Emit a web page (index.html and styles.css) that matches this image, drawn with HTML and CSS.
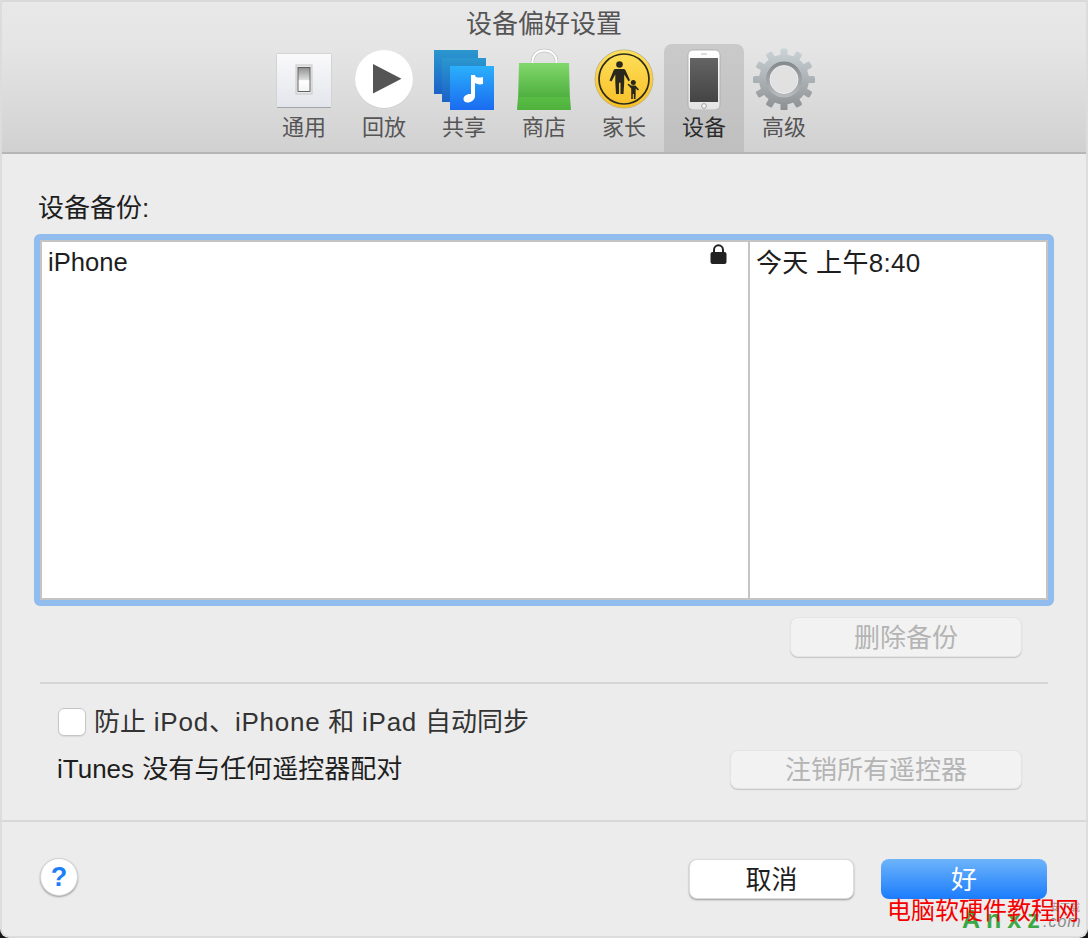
FILE: index.html
```html
<!DOCTYPE html>
<html lang="zh-CN">
<head>
<meta charset="utf-8">
<title>设备偏好设置</title>
<link rel="stylesheet" href="styles.css">
</head>
<body>
<div class="window">
  <header class="toolbar">
    <h1 class="title">设备偏好设置</h1>
    <nav class="tabs">
      <div class="tab">
        <svg class="icon" viewBox="0 0 80 64" width="80" height="64">
          <defs>
            <linearGradient id="plate" x1="0" y1="0" x2="0" y2="1"><stop offset="0" stop-color="#fafafb"/><stop offset="1" stop-color="#e3e5ec"/></linearGradient>
            <linearGradient id="rocker" x1="0" y1="0" x2="0" y2="1"><stop offset="0" stop-color="#8f8f8f"/><stop offset=".5" stop-color="#dcdcdc"/><stop offset=".55" stop-color="#fff"/><stop offset="1" stop-color="#f4f4f4"/></linearGradient>
          </defs>
          <rect x="12.5" y="7.5" width="55" height="54" rx="1" fill="url(#plate)" stroke="#d4d4d6"/>
          <path d="M13 61.5H67" stroke="#a4a4a6" stroke-width="1"/>
          <rect x="32" y="19" width="16" height="29" fill="#e9e9ea" stroke="#c8c8c8"/>
          <rect x="34" y="21.500" width="12" height="24" fill="url(#rocker)" stroke="#555" stroke-width=".9"/>
        </svg>
        <span class="tab-label">通用</span>
      </div>
      <div class="tab">
        <svg class="icon" viewBox="0 0 80 64" width="80" height="64">
          <circle cx="40" cy="33.500" r="29" fill="#c4c4c4"/>
          <circle cx="40" cy="33" r="29" fill="#fff"/>
          <path d="M29 18V47.500L57.500 32.800Z" fill="#555"/>
        </svg>
        <span class="tab-label">回放</span>
      </div>
      <div class="tab">
        <svg class="icon" viewBox="0 0 80 64" width="80" height="64">
          <defs>
            <linearGradient id="back" x1="0" y1="0" x2="0" y2="1"><stop offset="0" stop-color="#2b97cf"/><stop offset="1" stop-color="#1b62c6"/></linearGradient>
            <linearGradient id="front" x1="0" y1="0" x2="0" y2="1"><stop offset="0" stop-color="#2bb0fb"/><stop offset="1" stop-color="#1a6bf0"/></linearGradient>
          </defs>
          <rect x="10" y="4" width="44" height="44" fill="url(#back)"/>
          <rect x="18" y="12" width="44" height="44" fill="url(#back)"/>
          <rect x="26" y="20" width="44" height="44" fill="url(#front)"/>
          <path d="M47 29H51C51 32 55 32 59 31V38C55 39 53 38 51 37V50C51 54 47 56.500 43.500 56.500C41 56.500 39.500 55 39.500 53C39.500 50 43 47.500 47 48Z" fill="#fff"/>
        </svg>
        <span class="tab-label">共享</span>
      </div>
      <div class="tab">
        <svg class="icon" viewBox="0 0 80 64" width="80" height="64">
          <defs>
            <linearGradient id="bag" x1="0" y1="0" x2="0" y2="1"><stop offset="0" stop-color="#82d86c"/><stop offset=".7" stop-color="#4fb040"/><stop offset=".71" stop-color="#58bd45"/><stop offset="1" stop-color="#4fb03c"/></linearGradient>
          </defs>
          <path d="M28.500 18V16C28.500 8.500 34 4.500 40.500 4.500C47 4.500 52.500 8.500 52.500 16V18" fill="none" stroke="#c4c4c4" stroke-width="3.400"/>
          <path d="M28.500 18V16C28.500 8.500 34 4.500 40.500 4.500C47 4.500 52.500 8.500 52.500 16V18" fill="none" stroke="#fff" stroke-width="2"/>
          <path d="M15 17H65L65.800 49L67 63.500C67 64.500 66 65 65 65H15C14 65 13 64.500 13 63.500L14.200 49Z" fill="url(#bag)"/>
        </svg>
        <span class="tab-label">商店</span>
      </div>
      <div class="tab">
        <svg class="icon" viewBox="0 0 80 64" width="80" height="64">
          <defs>
            <linearGradient id="gold" x1="0" y1="0" x2="0" y2="1"><stop offset="0" stop-color="#fde05a"/><stop offset="1" stop-color="#f8bf28"/></linearGradient>
          </defs>
          <circle cx="40" cy="33" r="29.500" fill="#b9b08a"/>
          <circle cx="40" cy="33" r="28.800" fill="url(#gold)"/>
          <circle cx="40" cy="33" r="25" fill="none" stroke="#2c2a1e" stroke-width="1.700"/>
          <circle cx="35.500" cy="18.500" r="3.300" fill="#2a281c"/>
          <path d="M31.500 23H39.500C40.500 23 41.200 23.600 41.600 24.400L46 34.300L44.500 35.200L40.200 28.500V36.500L39.500 48H36.500V36.800H35V48H32L31.300 36.500V28.500L27.500 35.500L25.500 34.500L29.500 24.400C29.900 23.600 30.500 23 31.500 23Z" fill="#2a281c"/>
          <circle cx="49.300" cy="36.500" r="2.500" fill="#2a281c"/>
          <path d="M47 39.500H51.500L55 43.500L54 44.500L51.700 42.500V47L51.500 53H49.800V48H48.800V53H47.200V42.500L43.500 38.500L44.400 37.700Z" fill="#2a281c"/>
        </svg>
        <span class="tab-label">家长</span>
      </div>
      <div class="tab tab-active">
        <svg class="icon" viewBox="0 0 80 64" width="80" height="64">
          <defs>
            <linearGradient id="screen" x1="0" y1="0" x2="0" y2="1"><stop offset="0" stop-color="#646464"/><stop offset="1" stop-color="#444"/></linearGradient>
            <linearGradient id="phone" x1="0" y1="0" x2="0" y2="1"><stop offset="0" stop-color="#fff"/><stop offset="1" stop-color="#e4e4e4"/></linearGradient>
          </defs>
          <rect x="24" y="4" width="32" height="60" rx="5" fill="url(#phone)" stroke="#a8a8a8" stroke-width=".8"/>
          <rect x="26" y="12" width="28" height="44" fill="url(#screen)"/>
          <circle cx="40" cy="60" r="2.400" fill="#f4f4f4" stroke="#999" stroke-width=".9"/>
          <rect x="37" y="7.400" width="6" height="1" rx=".5" fill="#bbb"/>
        </svg>
        <span class="tab-label">设备</span>
      </div>
      <div class="tab">
        <svg class="icon" viewBox="0 0 80 64" width="80" height="64">
          <defs>
            <linearGradient id="steel" x1="0" y1="0" x2="0" y2="1"><stop offset="0" stop-color="#cdd6da"/><stop offset="1" stop-color="#8d9093"/></linearGradient>
            <linearGradient id="steelring" x1="0" y1="0" x2="0" y2="1"><stop offset="0" stop-color="#84888b"/><stop offset="1" stop-color="#b8bcbf"/></linearGradient>
            <rect id="tooth" x="-3.500" y="-31" width="7" height="11" rx="1.500" fill="#fff"/>
            <mask id="gearmask" maskUnits="userSpaceOnUse" x="0" y="0" width="80" height="64">
              <g transform="translate(40 33.500)">
                <circle r="25" fill="#fff"/>
                <use href="#tooth"/>
                <use href="#tooth" transform="rotate(30)"/>
                <use href="#tooth" transform="rotate(60)"/>
                <use href="#tooth" transform="rotate(90)"/>
                <use href="#tooth" transform="rotate(120)"/>
                <use href="#tooth" transform="rotate(150)"/>
                <use href="#tooth" transform="rotate(180)"/>
                <use href="#tooth" transform="rotate(210)"/>
                <use href="#tooth" transform="rotate(240)"/>
                <use href="#tooth" transform="rotate(270)"/>
                <use href="#tooth" transform="rotate(300)"/>
                <use href="#tooth" transform="rotate(330)"/>
              </g>
            </mask>
          </defs>
          <rect x="0" y="0" width="80" height="64" fill="url(#steel)" mask="url(#gearmask)"/>
          <circle cx="40" cy="33.500" r="18" fill="url(#steelring)"/>
          <circle cx="40" cy="33.500" r="14" fill="#e2e1e2" stroke="#f0f1f1" stroke-width=".8"/>
        </svg>
        <span class="tab-label">高级</span>
      </div>
    </nav>
  </header>

  <main class="pane">
    <div class="section-label">设备备份:</div>
    <div class="backup-table">
      <div class="cell cell-name">
        <span>iPhone</span>
        <svg class="lock" viewBox="0 0 17 20" width="17" height="20">
          <path d="M4 9V6C4 3.200 6 1.300 8.500 1.300C11 1.300 13 3.200 13 6V9" fill="none" stroke="#222" stroke-width="2"/>
          <rect x="0.500" y="8" width="16" height="12" rx="2" fill="#222"/>
        </svg>
      </div>
      <div class="cell cell-date">今天 上午8:40</div>
    </div>
    <div class="row-end">
      <button class="btn btn-disabled btn-delete" disabled>删除备份</button>
    </div>
    <div class="rule"></div>
    <label class="check-row">
      <span class="checkbox"></span>
      <span class="check-text">防止 <span class="latin">iPod</span>、<span class="latin">iPhone</span> 和 <span class="latin">iPad</span> 自动同步</span>
    </label>
    <div class="remote-row">
      <span class="remote-text">iTunes 没有与任何遥控器配对</span>
      <button class="btn btn-disabled btn-remote" disabled>注销所有遥控器</button>
    </div>
  </main>

  <footer class="footer">
    <button class="help">?</button>
    <button class="btn btn-cancel">取消</button>
    <button class="btn btn-ok">好</button>
  </footer>

  <div class="watermark">
    <span class="wm-small">安下载</span>
    <span class="wm-green">Anxz</span>
    <span class="wm-com">.com</span>
    <span class="wm-red">电脑软硬件教程网</span>
  </div>
</div>
</body>
</html>
```
FILE: styles.css
```css
* { box-sizing: border-box; }
html, body { margin: 0; padding: 0; }
body {
  width: 1088px;
  height: 938px;
  overflow: hidden;
  background: #161616;
  font-family: "Liberation Sans", "Noto Sans CJK SC", sans-serif;
  color: #1e1e1e;
}
.window {
  position: relative;
  width: 1088px;
  height: 938px;
  display: flex;
  flex-direction: column;
  background: #ececec;
  border: solid #dcdcdc;
  border-width: 0 2px 2px;
  border-radius: 0 0 9px 9px;
  overflow: hidden;
}
.toolbar {
  height: 154px;
  margin: 0 -2px;
  flex: none;
  background: linear-gradient(#e9e8e9, #e6e5e6 30%, #d2d1d2);
  border-top: 2px solid #d9d9d9;
  border-bottom: 2px solid #b6b6b6;
  display: flex;
  flex-direction: column;
}
.title {
  margin: 0;
  height: 42px;
  padding-bottom: 4px;
  flex: none;
  display: flex;
  align-items: center;
  justify-content: center;
  font-size: 26px;
  font-weight: 400;
  color: #555;
}
.tabs {
  flex: 1;
  display: flex;
  justify-content: center;
}
.tab {
  width: 80px;
  padding-top: 2px;
  display: flex;
  flex-direction: column;
  align-items: center;
  border-radius: 8px 8px 0 0;
}
.tab-active {
  background: linear-gradient(#cbcacb, #bfbfbf);
}
.icon { display: block; flex: none; }
.tab-label {
  height: 36px;
  line-height: 36px;
  font-size: 22px;
  color: #555;
}
.tab-active .tab-label { color: #2c2c2c; }

.pane {
  height: 666px;
  flex: none;
  padding: 39px 32px 0;
  display: flex;
  flex-direction: column;
}
.section-label {
  height: 30px;
  line-height: 30px;
  padding-left: 4px;
  margin-bottom: 11px;
  font-size: 26px;
  color: #1e1e1e;
}
.backup-table {
  height: 372px;
  flex: none;
  display: flex;
  background: #fff;
  border: 6px solid #90bdee;
  border-radius: 6px;
  box-shadow: inset 0 0 0 2px #c4c4c4;
  padding: 2px;
  font-size: 25.6px;
  color: #1e1e1e;
}
.cell { line-height: 40px; }
.cell-name {
  width: 706px;
  flex: none;
  padding: 0 21px 0 6px;
  display: flex;
  justify-content: space-between;
  align-items: flex-start;
}
.lock { margin-top: 2px; flex: none; }
.cell-date {
  flex: 1;
  padding-left: 6px;
  padding-top: 1px;
  border-left: 2px solid #c4c4c4;
  font-size: 26px;
  letter-spacing: .3px;
}
.row-end {
  display: flex;
  justify-content: flex-end;
  margin: 11px 32px 0 0;
}
.btn {
  height: 40px;
  padding: 1px 0 0;
  border-radius: 8px;
  font-family: inherit;
  font-size: 26px;
  line-height: 1;
}
.btn-disabled {
  background: #f2f2f2;
  color: #b4b4b4;
  border: 1px solid #e4e4e4;
  box-shadow: 0 1px 1px rgba(0, 0, 0, .16);
}
.btn-delete { width: 232px; }
.btn-remote { width: 292px; height: 39px; padding-top: 0; }
.rule {
  height: 2px;
  flex: none;
  margin: 25px 6px 0;
  background: #d6d6d6;
}
.check-row {
  display: flex;
  align-items: center;
  gap: 8px;
  height: 28px;
  margin: 24px 0 0 24px;
  font-size: 26px;
  color: #333;
}
.check-text { margin-top: -5px; white-space: nowrap; word-spacing: .6px; }
.latin { letter-spacing: .75px; }
.checkbox {
  width: 28px;
  height: 28px;
  flex: none;
  background: #fff;
  border: 1px solid #c6c6c6;
  border-radius: 6px;
  box-shadow: 0 1px 1px rgba(0, 0, 0, .08);
}
.remote-row {
  display: flex;
  align-items: center;
  justify-content: space-between;
  margin: 14px 32px 0 23px;
  font-size: 26px;
  color: #1e1e1e;
}
.remote-text { margin-top: -6px; white-space: nowrap; word-spacing: 1px; }
.footer {
  flex: 1;
  display: flex;
  align-items: flex-start;
  gap: 27px;
  padding: 37px 41px 0 40px;
  margin: 0 -2px;
  border-top: 2px solid #d8d8d8;
}
.help {
  width: 38px;
  height: 38px;
  margin: -1px auto 0 0;
  padding: 0;
  border: 1px solid #d4d4d4;
  border-radius: 50%;
  background: #fff;
  color: #1d7ff5;
  font-family: inherit;
  font-size: 27px;
  font-weight: 700;
  line-height: 36px;
  box-shadow: 0 1px 2px rgba(0, 0, 0, .35);
}
.btn-cancel {
  width: 165px;
  background: #fff;
  color: #1e1e1e;
  border: 1px solid #dcdcdc;
  box-shadow: 0 1px 2px rgba(0, 0, 0, .35);
}
.btn-ok {
  width: 166px;
  background: linear-gradient(#6db4fa, #1b7cfc);
  color: #fff;
  border: 0;
}
.watermark {
  position: absolute;
  left: 0;
  top: 0;
  width: 100%;
  height: 100%;
  pointer-events: none;
}
.watermark span { position: absolute; white-space: nowrap; }
.wm-red {
  left: 885px;
  top: 897px;
  font-size: 24px;
  line-height: 28px;
  color: #f40000;
}
.wm-green {
  left: 960px;
  top: 905px;
  font-size: 25px;
  line-height: 28px;
  font-weight: 700;
  letter-spacing: 6px;
  color: #3aa845;
}
.wm-com {
  left: 1041px;
  top: 912px;
  font-size: 16px;
  line-height: 20px;
  letter-spacing: 1px;
  font-style: italic;
  color: #8a8a8a;
}
.wm-small {
  left: 1048px;
  top: 902px;
  font-size: 10px;
  line-height: 12px;
  color: #9a9a9a;
}
```
